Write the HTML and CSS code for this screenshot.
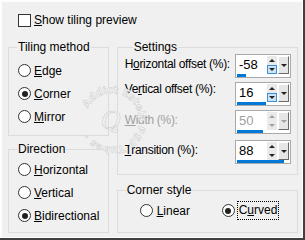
FILE: index.html
```html
<!DOCTYPE html>
<html>
<head>
<meta charset="utf-8">
<link rel="stylesheet" href="styles.css">
</head>
<body>
<div class="window">
  <div class="check-row">
    <span class="checkbox"></span>
    <span><u>S</u>how tiling preview</span>
  </div>
  <div class="columns">
    <div class="col col-left">
      <fieldset class="group tiling">
        <legend>Tiling method</legend>
        <div class="radio-list">
          <div class="radio-row"><span class="radio"></span><span><u>E</u>dge</span></div>
          <div class="radio-row"><span class="radio on"></span><span><u>C</u>orner</span></div>
          <div class="radio-row"><span class="radio"></span><span><u>M</u>irror</span></div>
        </div>
      </fieldset>
      <fieldset class="group direction">
        <legend>Direction</legend>
        <div class="radio-list">
          <div class="radio-row"><span class="radio"></span><span><u>H</u>orizontal</span></div>
          <div class="radio-row"><span class="radio"></span><span><u>V</u>ertical</span></div>
          <div class="radio-row"><span class="radio on"></span><span><u>B</u>idirectional</span></div>
        </div>
      </fieldset>
    </div>
    <div class="col col-right">
      <fieldset class="group settings">
        <legend>Settings</legend>
        <div class="field-row r1">
          <span class="label">H<u>o</u>rizontal offset (%):</span>
          <div class="spin">
            <div class="spin-main">
              <div class="spin-val">-58</div>
              <div class="spin-ud"><span class="up"></span><span class="down hot"></span></div>
              <div class="spin-drop"><span class="tri"></span></div>
            </div>
            <div class="spin-track"><span class="bar" style="width:9px"></span></div>
          </div>
        </div>
        <div class="field-row r2">
          <span class="label">Ve<u>r</u>tical offset (%):</span>
          <div class="spin">
            <div class="spin-main">
              <div class="spin-val">16</div>
              <div class="spin-ud"><span class="up"></span><span class="down hot"></span></div>
              <div class="spin-drop"><span class="tri"></span></div>
            </div>
            <div class="spin-track"><span class="bar" style="width:29px"></span></div>
          </div>
        </div>
        <div class="field-row r3 disabled">
          <span class="label"><u>W</u>idth (%):</span>
          <div class="spin">
            <div class="spin-main">
              <div class="spin-val">50</div>
              <div class="spin-ud"><span class="up"></span><span class="down"></span></div>
              <div class="spin-drop"><span class="tri"></span></div>
            </div>
            <div class="spin-track"><span class="bar" style="width:26px"></span></div>
          </div>
        </div>
        <div class="field-row r4">
          <span class="label"><u>T</u>ransition (%):</span>
          <div class="spin">
            <div class="spin-main">
              <div class="spin-val">88</div>
              <div class="spin-ud"><span class="up"></span><span class="down"></span></div>
              <div class="spin-drop"><span class="tri"></span></div>
            </div>
            <div class="spin-track"><span class="bar" style="width:47px"></span></div>
          </div>
        </div>
      </fieldset>
      <fieldset class="group corner">
        <legend>Corner style</legend>
        <div class="corner-options">
          <div class="radio-row opt-linear"><span class="radio"></span><span><u>L</u>inear</span></div>
          <div class="radio-row"><span class="radio on"></span><span class="focus">C<u>u</u>rved</span></div>
        </div>
      </fieldset>
    </div>
  </div>
  <svg class="watermark" width="70" height="70" viewBox="0 0 70 70">
    <defs>
      <path id="ring" d="M 8,35 A 27 27 0 1 1 62,35 A 27 27 0 1 1 8,35"/>
    </defs>
    <text class="wm-text"><textPath href="#ring" startOffset="12">Addict Estela  PSP Tubes  ·</textPath></text>
    <text class="wm-q" x="24" y="44">Q</text>
  </svg>
</div>
</body>
</html>
```
FILE: styles.css
```css
html, body {
  margin: 0;
  padding: 0;
  background: #f0f0f0;
}

.window {
  position: relative;
  width: 305px;
  height: 240px;
  box-sizing: border-box;
  padding: 13px 7px 0 8px;
  background: #f0f0f0;
  font-family: "Liberation Sans", Arial, sans-serif;
  font-size: 12px;
  color: #000;
  box-shadow: inset -2px -2px 0 #3f3f3f, inset -3px -3px 0 #fdfdfd, inset 2px 2px 0 #fdfdfd, inset 1px 1px 0 #f0f0f0;
  overflow: hidden;
}

u { text-decoration: underline; text-underline-offset: 1px; }

.check-row {
  display: flex;
  align-items: center;
  gap: 3px;
  margin-left: 10px;
  height: 14px;
  line-height: 14px;
}

.checkbox {
  width: 13px;
  height: 13px;
  box-sizing: border-box;
  border: 1px solid #333;
  background: #fff;
}

.columns {
  display: flex;
  gap: 8px;
  margin-top: 13px;
}

.col {
  display: flex;
  flex-direction: column;
}

.col-left { width: 101px; }
.col-right { width: 182px; }

.group {
  margin: 0;
  padding: 0;
  border: 1px solid #dcdcdc;
  min-width: 0;
}

.group legend {
  padding: 0 1px;
  margin-left: 8px;
  line-height: 14px;
}

.radio-list {
  display: flex;
  flex-direction: column;
  padding-left: 9px;
}

.radio-row {
  display: flex;
  align-items: center;
  gap: 3px;
  height: 23px;
}

.radio {
  width: 13px;
  height: 13px;
  box-sizing: border-box;
  border: 1px solid #333;
  border-radius: 50%;
  background: #fff;
  display: flex;
  align-items: center;
  justify-content: center;
  flex: none;
}

.radio.on::after {
  content: "";
  width: 6px;
  height: 6px;
  border-radius: 50%;
  background: #222;
}

.tiling { height: 96px; box-sizing: border-box; }
.tiling .radio-list { padding-top: 5px; }

.direction { margin-top: 6px; height: 91px; box-sizing: border-box; }
.direction .radio-list { padding-top: 2px; }

.settings {
  height: 135px;
  box-sizing: border-box;
  padding: 0 6px 0 7px;
}

.field-row {
  display: flex;
  justify-content: space-between;
  align-items: flex-start;
  height: 28px;
}

.field-row .label {
  padding-top: 3px;
  white-space: nowrap;
  letter-spacing: -0.3px;
}
.r2 .label { padding-top: 0; }
.r4 { margin-top: 2px; }

.disabled .label, .disabled .spin-val { color: #a0a0a0; }

.spin {
  width: 56px;
  height: 24px;
  box-sizing: border-box;
  border: 1px solid #a9a9a9;
  background: #fff;
  display: flex;
  flex-direction: column;
  flex: none;
}

.spin-main {
  display: flex;
  height: 19px;
  padding-top: 1px;
}

.spin-val {
  flex: 1;
  padding-left: 3px;
  line-height: 18px;
  font-size: 13px;
}

.spin-ud {
  width: 10px;
  display: flex;
  flex-direction: column;
  margin-right: 1px;
}

.spin-ud span {
  flex: 1;
  display: flex;
  align-items: center;
  justify-content: center;
  background: #eaeaea;
  box-sizing: border-box;
  border: 1px solid #eaeaea;
}

.spin-ud .up::after {
  content: "";
  border-left: 3px solid transparent;
  border-right: 3px solid transparent;
  border-bottom: 3px solid #222;
}

.spin-ud .down::after {
  content: "";
  border-left: 3px solid transparent;
  border-right: 3px solid transparent;
  border-top: 3px solid #222;
}

.spin-ud .down.hot {
  background: #cce4f7;
  border-color: #3c8fd8;
}

.disabled .spin-ud .up::after { border-bottom-color: #a0a0a0; }
.disabled .spin-ud .down::after { border-top-color: #a0a0a0; }

.spin-drop {
  width: 11px;
  height: 18px;
  box-sizing: border-box;
  background: #e6e6e6;
  border-top: 1px solid #fff;
  border-left: 1px solid #fff;
  border-right: 1px solid #6a6a6a;
  border-bottom: 1px solid #6a6a6a;
  display: flex;
  align-items: center;
  justify-content: center;
  margin-right: 1px;
}

.spin-drop .tri {
  border-left: 3px solid transparent;
  border-right: 3px solid transparent;
  border-top: 3px solid #222;
}

.disabled .spin-drop .tri { border-top-color: #a0a0a0; }

.spin-track {
  height: 3px;
  padding-left: 1px;
}

.bar {
  display: block;
  height: 3px;
  background: #0078d7;
}

.corner {
  margin-top: 8px;
  height: 50px;
  box-sizing: border-box;
}

.corner-options {
  display: flex;
  padding-left: 22px;
  padding-top: 2px;
}

.opt-linear { width: 82px; gap: 4px; }

.focus {
  outline: 1px dotted #000;
  padding: 1px 1px 2px 1px;
  line-height: 14px;
}

.watermark {
  position: absolute;
  left: 77px;
  top: 85px;
  pointer-events: none;
}

.wm-text {
  font-family: "DejaVu Sans", sans-serif;
  font-size: 10px;
  font-weight: bold;
  fill: #f4f4f4;
  stroke: #cdcdcd;
  stroke-width: 0.5;
}

.wm-q {
  font-family: "DejaVu Serif", serif;
  font-size: 24px;
  font-style: italic;
  fill: #f4f4f4;
  stroke: #cdcdcd;
  stroke-width: 0.6;
}
```
